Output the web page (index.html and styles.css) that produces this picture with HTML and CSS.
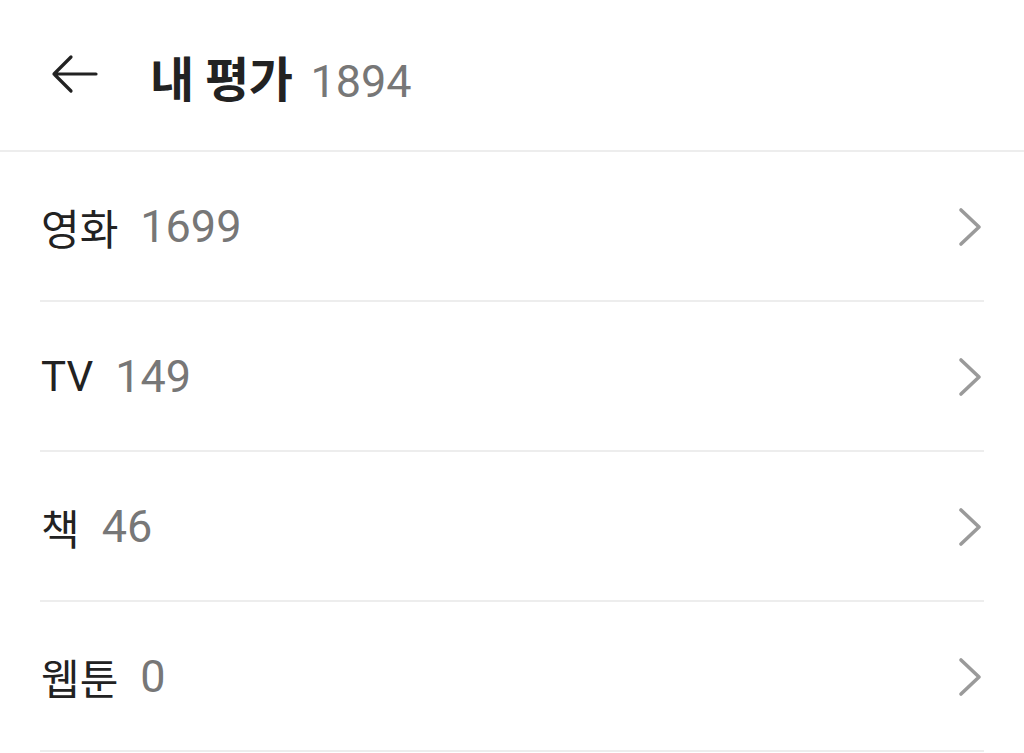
FILE: index.html
```html
<!DOCTYPE html>
<html lang="ko">
<head>
<meta charset="utf-8">
<link rel="stylesheet" href="styles.css">
</head>
<body>
<header class="header">
  <svg class="back" width="48" height="40" viewBox="0 0 48 40">
    <path d="M46 20H4M21 3L4 20L21 37" fill="none" stroke="#222" stroke-width="3.2" stroke-linecap="round" stroke-linejoin="round"/>
  </svg>
  <h1 class="title">내 평가<span class="count">1894</span></h1>
</header>
<ul class="list">
  <li class="row"><span class="label">영화</span><span class="num">1699</span><svg class="chev" width="26" height="40" viewBox="0 0 26 40"><path d="M4 3L22 20L4 37" fill="none" stroke="#9a9a9a" stroke-width="3.6" stroke-linecap="round" stroke-linejoin="round"/></svg></li>
  <li class="row"><span class="label">TV</span><span class="num">149</span><svg class="chev" width="26" height="40" viewBox="0 0 26 40"><path d="M4 3L22 20L4 37" fill="none" stroke="#9a9a9a" stroke-width="3.6" stroke-linecap="round" stroke-linejoin="round"/></svg></li>
  <li class="row"><span class="label">책</span><span class="num">46</span><svg class="chev" width="26" height="40" viewBox="0 0 26 40"><path d="M4 3L22 20L4 37" fill="none" stroke="#9a9a9a" stroke-width="3.6" stroke-linecap="round" stroke-linejoin="round"/></svg></li>
  <li class="row"><span class="label">웹툰</span><span class="num">0</span><svg class="chev" width="26" height="40" viewBox="0 0 26 40"><path d="M4 3L22 20L4 37" fill="none" stroke="#9a9a9a" stroke-width="3.6" stroke-linecap="round" stroke-linejoin="round"/></svg></li>
</ul>
</body>
</html>
```
FILE: styles.css
```css
html, body {
  margin: 0;
  padding: 0;
  background: #fff;
}
body {
  font-family: "Roboto", "Noto Sans CJK KR", sans-serif;
  color: #222;
  width: 1024px;
  height: 753px;
  overflow: hidden;
}
.header {
  height: 150px;
  border-bottom: 2px solid #ededed;
  display: flex;
  align-items: center;
  padding-left: 50px;
  box-sizing: content-box;
}
.back {
  display: block;
  margin-right: 52px;
  margin-top: -2px;
}
.title {
  margin: 0;
  font-size: 48px;
  font-weight: 700;
  color: #222;
  display: flex;
  align-items: baseline;
  letter-spacing: -0.5px;
  margin-top: 2px;
}
.count {
  font-family: "Roboto", sans-serif;
  font-size: 45px;
  font-weight: 400;
  color: #777;
  margin-left: 18px;
  letter-spacing: 0;
}
.list {
  list-style: none;
  margin: 0 40px;
  padding: 0;
}
.row {
  height: 148px;
  border-bottom: 2px solid #ededed;
  display: flex;
  align-items: center;
  padding-left: 1px;
}
.label {
  font-size: 42px;
  color: #222;
}
.num {
  font-family: "Roboto", sans-serif;
  font-size: 45px;
  color: #777;
  margin-left: 22px;
  flex: 1;
}
.chev {
  display: block;
  margin-right: 1px;
  margin-top: 2px;
}
```
